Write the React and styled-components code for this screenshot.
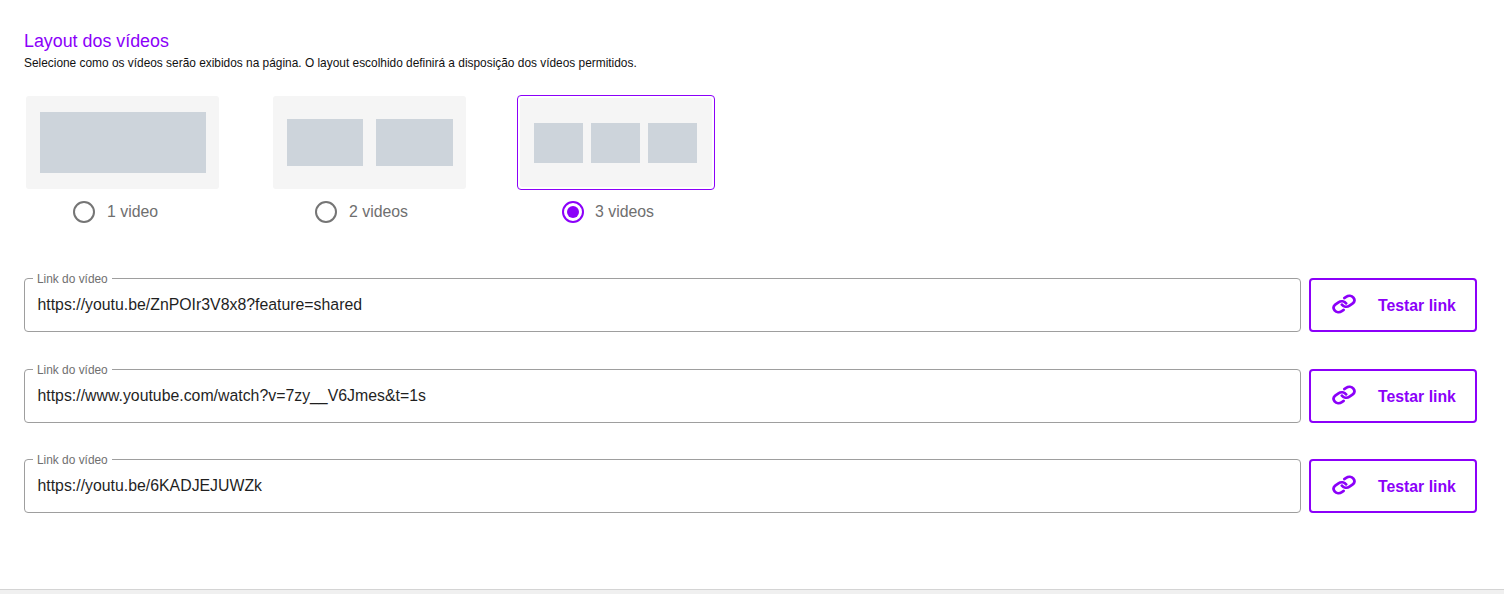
import React from "react";
import styled, { createGlobalStyle } from "styled-components";

const Global = createGlobalStyle`
  html, body { margin: 0; padding: 0; background: #fff; }
  body { font-family: "Liberation Sans", Arial, sans-serif; }
  * { box-sizing: border-box; }
`;

const Page = styled.div`
  width: 1504px;
  height: 594px;
  display: flex;
  flex-direction: column;
  overflow: hidden;
`;

const Content = styled.main`
  flex: 1;
  padding: 31px 27px 0 24px;
`;

const Title = styled.h2`
  margin: 0;
  font-size: 17.85px;
  line-height: 20px;
  font-weight: 400;
  color: #8b00f9;
`;

const Subtitle = styled.p`
  margin: 5px 0 0;
  font-size: 11.9px;
  line-height: 14px;
  color: #111;
`;

const Options = styled.div`
  display: flex;
  margin-top: 26px;
  padding-left: 2px;
`;

const Option = styled.label`
  width: ${(p) => p.$w}px;
  display: flex;
  flex-direction: column;
`;

const Preview = styled.div`
  width: ${(p) => (p.$selected ? "198px" : "193px")};
  height: ${(p) => (p.$selected ? "95px" : "93px")};
  margin-top: ${(p) => (p.$selected ? "-1px" : "0")};
  border-radius: 4px;
  border: ${(p) => (p.$selected ? "1px solid #8b00f9" : "none")};
  padding: ${(p) => (p.$selected ? "2px" : "0")};
  background: #fff;
`;

const PreviewInner = styled.div`
  height: 100%;
  background: #f5f5f5;
  border-radius: 3px;
  display: flex;
  align-items: center;
  justify-content: center;
  gap: ${(p) => p.$gap}px;
  padding-right: ${(p) => p.$pr || 0}px;
`;

const Tile = styled.div`
  width: ${(p) => p.$w}px;
  height: ${(p) => p.$h}px;
  background: #cdd4db;
`;

const RadioRow = styled.div`
  display: flex;
  align-items: center;
  gap: ${(p) => (p.$selected ? "11px" : "12px")};
  height: 22px;
  margin-top: ${(p) => (p.$selected ? "11px" : "12px")};
  margin-left: ${(p) => p.$ml}px;
`;

const Radio = styled.span`
  width: 22px;
  height: 22px;
  border-radius: 50%;
  border: 2px solid ${(p) => (p.$on ? "#8b00f9" : "#757575")};
  display: flex;
  align-items: center;
  justify-content: center;
  &::after {
    content: "";
    display: ${(p) => (p.$on ? "block" : "none")};
    width: 12px;
    height: 12px;
    border-radius: 50%;
    background: #8b00f9;
  }
`;

const RadioText = styled.span`
  font-size: 15.85px;
  color: #6f6f6f;
`;

const Rows = styled.div`
  margin-top: 55px;
  display: flex;
  flex-direction: column;
`;

const Row = styled.div`
  display: flex;
  gap: 8px;
  height: 54px;
  margin-bottom: ${(p) => p.$mb}px;
`;

const Field = styled.div`
  position: relative;
  flex: 1;
  border: 1px solid #9e9e9e;
  border-radius: 4px;
  display: flex;
  align-items: center;
  padding: 0 12px 1px 12.5px;
`;

const FloatLabel = styled.span`
  position: absolute;
  top: -6px;
  left: 8px;
  padding: 0 4px;
  background: #fff;
  font-size: 11.9px;
  line-height: 13px;
  color: #6f6f6f;
`;

const Value = styled.span`
  font-size: 15.85px;
  color: #1f1f1f;
`;

const TestButton = styled.button`
  width: 168px;
  border: 2px solid #8b00f9;
  border-radius: 4px;
  background: #fff;
  color: #8b00f9;
  display: flex;
  align-items: center;
  padding: 1px 0 0 20px;
  gap: 21px;
  font-family: inherit;
  font-weight: 700;
  font-size: 15.8px;
`;

const IconSvg = styled.svg`
  flex: none;
  margin-top: -3px;
`;

const Footer = styled.footer`
  height: 5px;
  background: #f0f0f0;
  border-top: 1px solid #d4d4d4;
`;

const LinkIcon = () => (
  <IconSvg width="26" height="26" viewBox="0 0 24 24" fill="none" stroke="currentColor" strokeWidth="3" strokeLinecap="round" strokeLinejoin="round">
    <g transform="translate(12 12) scale(0.92 0.8) rotate(6) translate(-12 -12)">
      <path d="M10 13a5 5 0 0 0 7.54.54l3-3a5 5 0 0 0-7.07-7.07l-1.72 1.71" />
      <path d="M14 11a5 5 0 0 0-7.54-.54l-3 3a5 5 0 0 0 7.07 7.07l1.71-1.71" />
    </g>
  </IconSvg>
);

const options = [
  { label: "1 video", w: 247, ml: 47, tiles: [[166, 61]], gap: 0 },
  { label: "2 videos", w: 244, ml: 42, tiles: [[76, 47], [77, 47]], gap: 13 },
  { label: "3 videos", w: 198, ml: 45, tiles: [[49, 40], [49, 40], [49, 40]], gap: 8, pr: 1, selected: true },
];

const links = [
  ["https://youtu.be/ZnPOIr3V8x8?feature=shared", 37],
  ["https://www.youtube.com/watch?v=7zy__V6Jmes&t=1s", 36],
  ["https://youtu.be/6KADJEJUWZk", 0],
];

export default function App() {
  return (
    <Page>
      <Global />
      <Content>
        <Title>Layout dos vídeos</Title>
        <Subtitle>Selecione como os vídeos serão exibidos na página. O layout escolhido definirá a disposição dos vídeos permitidos.</Subtitle>
        <Options>
          {options.map((o) => (
            <Option key={o.label} $w={o.w} $selected={o.selected}>
              <Preview $selected={o.selected}>
                <PreviewInner $gap={o.gap} $pr={o.pr}>
                  {o.tiles.map(([w, h], i) => <Tile key={i} $w={w} $h={h} />)}
                </PreviewInner>
              </Preview>
              <RadioRow $ml={o.ml} $selected={o.selected}>
                <Radio $on={o.selected} />
                <RadioText>{o.label}</RadioText>
              </RadioRow>
            </Option>
          ))}
        </Options>
        <Rows>
          {links.map(([url, mb]) => (
            <Row key={url} $mb={mb}>
              <Field>
                <FloatLabel>Link do vídeo</FloatLabel>
                <Value>{url}</Value>
              </Field>
              <TestButton><LinkIcon />Testar link</TestButton>
            </Row>
          ))}
        </Rows>
      </Content>
      <Footer />
    </Page>
  );
}
